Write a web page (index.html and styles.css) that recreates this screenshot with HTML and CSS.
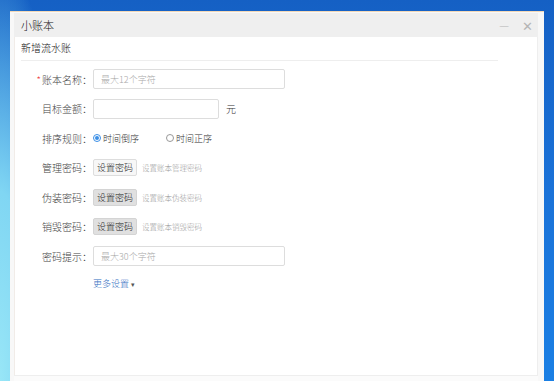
FILE: index.html
```html
<!DOCTYPE html>
<html>
<head>
  <meta charset="UTF-8">
  <title>小账本</title>
  <link rel="stylesheet" href="styles.css">
</head>
<body>
  <div class="window">
    <!-- 标题栏 -->
    <div class="title-bar">
      <div class="title-bar-text">小账本</div>
      <div class="window-controls">
        <span class="control-button minimize-button">&#8212;</span>
        <span class="control-button close-button">&#10005;</span>
      </div>
    </div>

    <div class="panel">
      <div class="panel-title">新增流水账</div>

      <div class="form">
        <div class="form-row">
          <label class="form-label"><span class="required">*</span>账本名称：</label>
          <input type="text" class="text-input wide" placeholder="最大12个字符">
        </div>

        <div class="form-row">
          <label class="form-label">目标金额：</label>
          <input type="text" class="text-input narrow">
          <span class="unit">元</span>
        </div>

        <div class="form-row">
          <label class="form-label">排序规则：</label>
          <label class="radio"><span class="radio-dot checked"></span>时间倒序</label>
          <label class="radio"><span class="radio-dot"></span>时间正序</label>
        </div>

        <div class="form-row">
          <label class="form-label">管理密码：</label>
          <button class="small-button">设置密码</button>
          <span class="hint">设置账本管理密码</span>
        </div>

        <div class="form-row">
          <label class="form-label">伪装密码：</label>
          <button class="small-button pressed">设置密码</button>
          <span class="hint">设置账本伪装密码</span>
        </div>

        <div class="form-row">
          <label class="form-label">销毁密码：</label>
          <button class="small-button pressed">设置密码</button>
          <span class="hint">设置账本销毁密码</span>
        </div>

        <div class="form-row">
          <label class="form-label">密码提示：</label>
          <input type="text" class="text-input wide" placeholder="最大30个字符">
        </div>

        <div class="form-row more-row">
          <a class="more-link">更多设置 <span class="caret">&#9662;</span></a>
        </div>
      </div>
    </div>

    <div class="footer"></div>
  </div>
</body>
</html>
```

FILE: styles.css
```css
body {
  margin: 0;
  padding: 0;
  height: 100vh;
  overflow: hidden;
  font-family: "Noto Sans CJK SC", "Liberation Sans", sans-serif;
  font-weight: 300;
  background:
    radial-gradient(ellipse 70px 420px at 0 100%, #98e6f7 0%, #80d6f3 45%, rgba(60, 150, 230, 0) 100%),
    linear-gradient(180deg, #1560c4 0%, #1a72d8 50%, #1a7fe4 100%);
}

/* 窗口 */
.window {
  margin: 11px 10px 0 10px;
  height: 370px;
  background-color: #f8f8f8;
  border-top: 1px solid #f2d8b8;
  padding: 1px 6px 0 4px;
  display: flex;
  flex-direction: column;
}

/* 标题栏 */
.title-bar {
  display: flex;
  justify-content: space-between;
  align-items: center;
  height: 24px;
  background-color: #efefef;
  padding: 0 5px 0 7px;
  user-select: none;
}

.title-bar-text {
  font-size: 11px;
  color: #111;
}

.window-controls {
  display: flex;
  gap: 11px;
  align-items: center;
}

.control-button {
  color: #b5b5b5;
  font-size: 11px;
  width: 12px;
  text-align: center;
}

.close-button {
  font-size: 13px;
}

/* 内容区域 */
.panel {
  height: 338px;
  background-color: #fff;
  border-left: 1px solid #f1ece8;
  border-right: 1px solid #eeeeee;
  padding: 0 39px 0 6px;
}

.panel-title {
  font-size: 10px;
  color: #111;
  height: 23px;
  line-height: 21px;
  border-bottom: 1px solid #eeeeee;
}

.form {
  padding-top: 8px;
}

.form-row {
  display: flex;
  align-items: center;
  height: 20px;
  margin-bottom: 9.5px;
}

.form-label {
  width: 71px;
  text-align: right;
  font-size: 10px;
  color: #444;
}

.required {
  color: #e33;
  margin-right: 1px;
}

.text-input {
  box-sizing: border-box;
  height: 20px;
  margin-left: 1px;
  padding: 0 7px;
  border: 1px solid #dddddd;
  border-radius: 2px;
  font-family: inherit;
  font-weight: 300;
  font-size: 9px;
  color: #333;
  outline: none;
}

.text-input::placeholder {
  color: #a8a8a8;
}

.wide {
  width: 192px;
}

.narrow {
  width: 126px;
}

.unit {
  margin-left: 7px;
  font-size: 10px;
  color: #333;
}

.radio {
  display: flex;
  align-items: center;
  font-size: 9px;
  color: #333;
  margin-left: 1px;
  margin-right: 26px;
}

.radio-dot {
  box-sizing: border-box;
  width: 8px;
  height: 8px;
  border-radius: 50%;
  border: 1px solid #999;
  margin-right: 2px;
  position: relative;
}

.radio-dot.checked {
  border-color: #3a8ee6;
}

.radio-dot.checked::after {
  content: "";
  position: absolute;
  left: 1px;
  top: 1px;
  width: 4px;
  height: 4px;
  border-radius: 50%;
  background-color: #3a8ee6;
}

.small-button {
  box-sizing: border-box;
  height: 17px;
  width: 44px;
  margin-left: 1px;
  padding: 0;
  border: 1px solid #dddddd;
  border-radius: 2px;
  background-color: #f7f7f7;
  font-family: inherit;
  font-weight: 300;
  font-size: 9px;
  color: #222;
}

.small-button.pressed {
  background-color: #e0e0e0;
  border-color: #d4d4d4;
}

.hint {
  margin-left: 5px;
  font-size: 7.5px;
  color: #999;
}

.more-row {
  padding-left: 72px;
  margin-top: -2px;
}

.more-link {
  font-size: 9px;
  color: #2f6cc0;
  cursor: pointer;
}

.caret {
  font-size: 7px;
  color: #555;
}

/* 底部 */
.footer {
  flex: 1;
  background-color: #fbfbfb;
  border-top: 1px solid #eeeeee;
}
```
